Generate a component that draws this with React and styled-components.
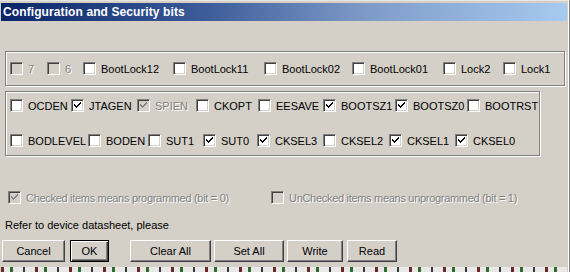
import styled, { createGlobalStyle } from "styled-components";

const Global = createGlobalStyle`
  html, body {
    margin: 0;
    padding: 0;
    background: #d4d0c8;
  }
  * {
    box-sizing: border-box;
  }
`;

const Window = styled.div`
  width: 570px;
  height: 272px;
  background: #d4d0c8;
  display: flex;
  flex-direction: column;
  font-family: "Liberation Sans", Arial, sans-serif;
  font-size: 11px;
  color: #000;
  overflow: hidden;
  border-top: 1px solid #e8e6e0;
  border-right: 1px solid #808080;
`;

const Frame = styled.div`
  flex: 1;
  display: flex;
  flex-direction: column;
  padding: 2px 1px 0 1px;
  border-right: 1px solid #fff;
`;

const TitleBar = styled.div`
  height: 18px;
  display: flex;
  align-items: center;
  padding-left: 2px;
  background: linear-gradient(to right, #0a246a 0%, #3a5a98 35%, #7f9cc8 65%, #a6caf0 100%);
  color: #fff;
  font-weight: 700;
  font-size: 12px;
  letter-spacing: 0.1px;
`;

const Body = styled.div`
  display: flex;
  flex-direction: column;
  padding: 0 0 0 4px;
`;

const Group = styled.div`
  width: ${(p) => p.$w}px;
  height: ${(p) => p.$h}px;
  margin-top: ${(p) => p.$top}px;
  border: 1px solid #808080;
  box-shadow: inset 1px 1px #fff, 1px 1px #fff;
  display: flex;
  flex-direction: column;
  gap: 22px;
  padding: ${(p) => p.$pad};
`;

const Row = styled.div`
  display: flex;
  align-items: center;
  height: 13px;
`;

const Item = styled.label`
  width: ${(p) => (p.$w ? `${p.$w}px` : "auto")};
  flex: none;
  display: flex;
  align-items: center;
  gap: 5px;
  white-space: nowrap;
  color: ${(p) => (p.$disabled ? "#808080" : "#000")};
  text-shadow: ${(p) => (p.$disabled ? "1px 1px #fff" : "none")};
  letter-spacing: ${(p) => p.$spacing || 0}px;
`;

const Box = styled.span`
  width: 13px;
  height: 13px;
  flex: none;
  display: flex;
  align-items: center;
  justify-content: center;
  background: ${(p) => (p.$disabled ? "#d4d0c8" : "#fff")};
  border: 1px solid;
  border-color: #808080 #fff #fff #808080;
  box-shadow: inset 1px 1px #404040, inset -1px -1px #d4d0c8;
`;

const Check = ({ color }) => (
  <svg width="7" height="7" viewBox="0 0 7 7">
    <path
      d="M0 2h1v1h1v1h1V3h1V2h1V1h1V0h1v2H6v1H5v1H4v1H3v1H2V5H1V4H0z"
      fill={color}
    />
  </svg>
);

const CheckBox = ({ label, checked, disabled, w, spacing }) => (
  <Item $w={w} $disabled={disabled} $spacing={spacing}>
    <Box $disabled={disabled}>
      {checked && <Check color={disabled ? "#808080" : "#000"} />}
    </Box>
    <span>{label}</span>
  </Item>
);

const Legend = styled.div`
  display: flex;
  align-items: center;
  height: 13px;
  margin-top: 35px;
  padding-left: 3px;
`;

const Note = styled.div`
  margin-top: 15px;
  height: 13px;
  line-height: 13px;
`;

const ButtonBar = styled.div`
  display: flex;
  align-items: center;
  margin-top: 8px;
  margin-left: -3px;
`;

const Button = styled.button`
  width: ${(p) => p.$w}px;
  height: 22px;
  margin-left: ${(p) => p.$left || 0}px;
  padding: 0;
  background: #d4d0c8;
  font-family: "Liberation Sans", Arial, sans-serif;
  font-size: 11px;
  color: #000;
  border: 1px solid;
  border-color: #fff #404040 #404040 #fff;
  box-shadow: inset -1px -1px #808080;
`;

const DefaultButton = styled(Button)`
  border: 1px solid #000;
  box-shadow: inset 1px 1px #fff, inset -1px -1px #404040, inset -2px -2px #808080;
`;

const Strip = styled.div`
  height: 5px;
  margin-top: auto;
  background: repeating-linear-gradient(
    to right,
    #6b2a2a 0 3px,
    #e8e8e8 3px 9px,
    #2f6a2f 9px 12px,
    #e8e8e8 12px 22px,
    #3a3a3a 22px 24px,
    #e8e8e8 24px 34px
  );
`;

const row1 = [
  { label: "7", w: 37, disabled: true },
  { label: "6", w: 36, disabled: true },
  { label: "BootLock12", w: 90 },
  { label: "BootLock11", w: 91 },
  { label: "BootLock02", w: 88 },
  { label: "BootLock01", w: 91 },
  { label: "Lock2", w: 60 },
  { label: "Lock1" },
];

const row2 = [
  { label: "OCDEN", w: 61 },
  { label: "JTAGEN", w: 66, checked: true },
  { label: "SPIEN", w: 59, checked: true, disabled: true },
  { label: "CKOPT", w: 62 },
  { label: "EESAVE", w: 65 },
  { label: "BOOTSZ1", w: 72, checked: true },
  { label: "BOOTSZ0", w: 72, checked: true },
  { label: "BOOTRST" },
];

const row3 = [
  { label: "BODLEVEL", w: 78 },
  { label: "BODEN", w: 60 },
  { label: "SUT1", w: 55 },
  { label: "SUT0", w: 54, checked: true },
  { label: "CKSEL3", w: 66, checked: true },
  { label: "CKSEL2", w: 66 },
  { label: "CKSEL1", w: 66, checked: true },
  { label: "CKSEL0", checked: true },
];

const renderRow = (items) =>
  items.map((it) => <CheckBox key={it.label} {...it} />);

export default function App() {
  return (
    <>
      <Global />
      <Window>
        <Frame>
          <TitleBar>Configuration and Security bits</TitleBar>
          <Body>
            <Group $w={560} $h={35} $top={30} $pad="10px 0 0 4px">
              <Row>{renderRow(row1)}</Row>
            </Group>
            <Group $w={535} $h={65} $top={5} $pad="7px 0 0 4px">
              <Row>{renderRow(row2)}</Row>
              <Row>{renderRow(row3)}</Row>
            </Group>
            <Legend>
              <CheckBox
                label="Checked items means programmed (bit = 0)"
                checked
                disabled
                w={263}
                spacing={-0.3}
              />
              <CheckBox
                label="UnChecked items means unprogrammed (bit = 1)"
                disabled
                spacing={-0.3}
              />
            </Legend>
            <Note>Refer to device datasheet, please</Note>
            <ButtonBar>
              <Button $w={63}>Cancel</Button>
              <DefaultButton $w={39} $left={5}>OK</DefaultButton>
              <Button $w={81} $left={21}>Clear All</Button>
              <Button $w={70} $left={3}>Set All</Button>
              <Button $w={56} $left={3}>Write</Button>
              <Button $w={50} $left={4}>Read</Button>
            </ButtonBar>
          </Body>
          <Strip />
        </Frame>
      </Window>
    </>
  );
}
